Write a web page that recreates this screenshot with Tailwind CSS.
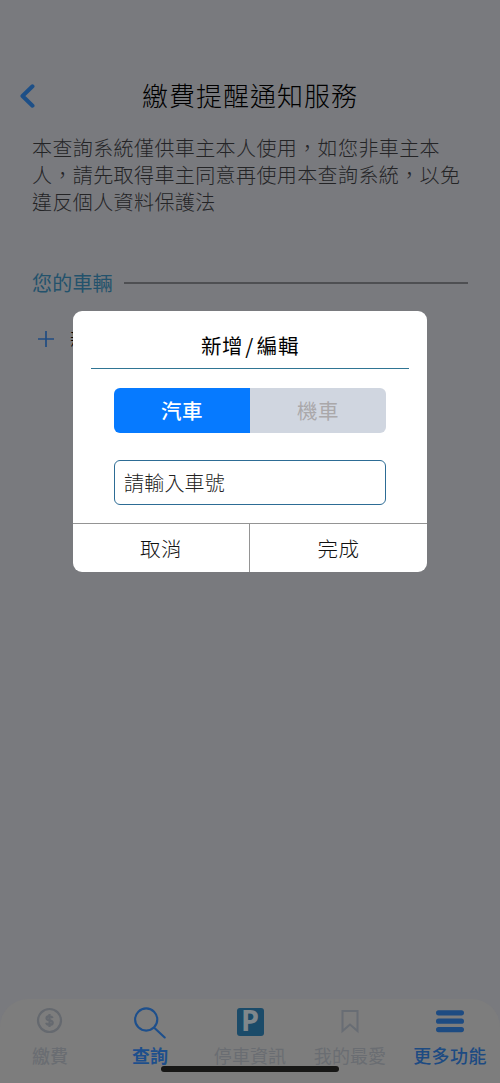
<!DOCTYPE html>
<html lang="zh-Hant">
<head>
<meta charset="utf-8">
<title>繳費提醒通知服務</title>
<script src="https://cdn.jsdelivr.net/npm/@tailwindcss/browser@4"></script>
</head>
<body class="font-['Noto_Sans_CJK_TC','Noto_Sans',sans-serif]">
<div class="relative flex h-[1083px] w-[500px] flex-col overflow-hidden bg-[#797a7e]">
  <header class="mt-[75px] grid h-10 shrink-0 grid-cols-[60px_1fr_60px] items-center">
    <svg class="mt-0.5 ml-[19px] h-6 w-4" viewBox="0 0 16 24" fill="none" stroke="#1d4f87" stroke-width="4" stroke-linecap="round" stroke-linejoin="round"><path d="M13.5 2.3 3.5 12 13.5 21.7"/></svg>
    <h1 class="text-center text-[26px] leading-10 font-light tracking-[1px] whitespace-nowrap text-black">繳費提醒通知服務</h1>
  </header>
  <main class="flex-1 px-8 pt-[19px]">
    <p class="text-[20px] leading-[27px] font-light tracking-[0.4px] whitespace-nowrap text-[#242426]">本查詢系統僅供車主本人使用，如您非車主本<br>人，請先取得車主同意再使用本查詢系統，以免<br>違反個人資料保護法</p>
    <div class="mt-[53px] flex h-[30px] items-center">
      <h2 class="w-[92px] text-[20px] leading-[30px] font-normal tracking-[0.2px] whitespace-nowrap text-[#23526c]">您的車輛</h2>
      <div class="h-[1.5px] flex-1 bg-[#4e4f52]"></div>
    </div>
    <div class="mt-[26px] flex h-[30px] items-center">
      <svg class="ml-1.5 h-4 w-4 shrink-0" viewBox="0 0 16 16" fill="none" stroke="#204c82" stroke-width="1.7"><path d="M8 0v16M0 8h16"/></svg>
      <span class="ml-4 text-[20px] leading-[30px] font-light whitespace-nowrap text-black">新增</span>
    </div>
  </main>
  <nav class="grid h-[84px] shrink-0 grid-cols-5 rounded-t-[28px] bg-[#7d7d7d] pt-2 text-[18px] font-medium text-[#6a6d72]">
    <div class="flex flex-col items-center">
      <svg class="h-8 w-8" viewBox="0 0 32 32" fill="none" stroke="#65696f" stroke-width="2.2"><circle cx="15.5" cy="13.5" r="11.5"/><path d="M18.6 11c-.5-1.3-1.6-1.9-3.1-1.9-1.9 0-3 .8-3 2.1 0 3.1 6.2 1.3 6.2 4.5 0 1.3-1.2 2.2-3.2 2.2-1.8 0-2.9-.7-3.3-2.1M15.5 7v13"/></svg>
      <span class="leading-8">繳費</span>
    </div>
    <div class="flex flex-col items-center text-[#1d4f8c]">
      <svg class="h-8 w-8" viewBox="0 0 32 32" fill="none" stroke="currentColor" stroke-width="2.1" stroke-linecap="round"><circle cx="12.2" cy="12.5" r="11.1"/><path d="m20.5 21 10.2 9.5"/></svg>
      <span class="leading-8 font-bold">查詢</span>
    </div>
    <div class="flex flex-col items-center">
      <div class="flex h-8 items-start justify-center"><div class="mt-px flex h-7 w-[27px] items-center justify-center rounded-[3px] bg-[#1b4b69] pb-[5px] font-['Noto_Sans',sans-serif] text-[29px] leading-none font-bold text-[#80878b]">P</div></div>
      <span class="leading-8 font-normal tracking-[0.1px]">停車資訊</span>
    </div>
    <div class="flex flex-col items-center">
      <svg class="h-8 w-8" viewBox="0 0 32 32" fill="none" stroke="#686d74" stroke-width="2"><path d="M8.5 4h15v20L16 17.5 8.5 24z"/></svg>
      <span class="leading-8 font-normal tracking-[0.1px]">我的最愛</span>
    </div>
    <div class="flex flex-col items-center text-[#1d4b82]">
      <svg class="h-8 w-8" viewBox="0 0 32 32" fill="none" stroke="currentColor" stroke-width="5.2" stroke-linecap="round"><path d="M4.6 5.8h22.8M4.6 14.2h22.8M4.6 22.6h22.8"/></svg>
      <span class="leading-8 tracking-[0.4px] whitespace-nowrap">更多功能</span>
    </div>
  </nav>

  <section class="absolute top-[311px] left-[73px] flex h-[261px] w-[354px] flex-col overflow-hidden rounded-[9px] bg-white">
    <h3 class="mx-[18px] flex h-[58px] justify-center border-b-[1.5px] border-[#2f7594] pt-[19px] text-[20.5px] leading-[30px] font-normal tracking-[0.6px] text-black"><span>新增</span><span class="mr-[3px] ml-[2px]">/</span><span>編輯</span></h3>
    <div class="mx-[41px] mt-[19px] grid h-[45px] shrink-0 grid-cols-2 overflow-hidden rounded-[6px] text-center text-[20.5px] leading-[45px] tracking-[0.5px]">
      <div class="bg-[#067aff] font-medium text-white">汽車</div>
      <div class="bg-[#d0d6e0] font-normal text-[#aaa8aa]">機車</div>
    </div>
    <div class="mx-[41px] mt-[27px] h-[45px] shrink-0 rounded-[6px] border border-[#2d6c95] px-[9px] text-[20px] leading-[43px] font-light tracking-[0.2px] text-[#222]">請輸入車號</div>
    <div class="mt-auto grid h-[49px] shrink-0 grid-cols-2 border-t border-[#949494] text-center text-[20.5px] leading-[48px] font-light tracking-[0.5px] text-[#111]">
      <div class="border-r border-[#949494]">取消</div>
      <div>完成</div>
    </div>
  </section>
  <div class="absolute top-[1066px] left-[161px] h-[6px] w-[178px] rounded-full bg-[#171716]"></div>
</div>
</body>
</html>
